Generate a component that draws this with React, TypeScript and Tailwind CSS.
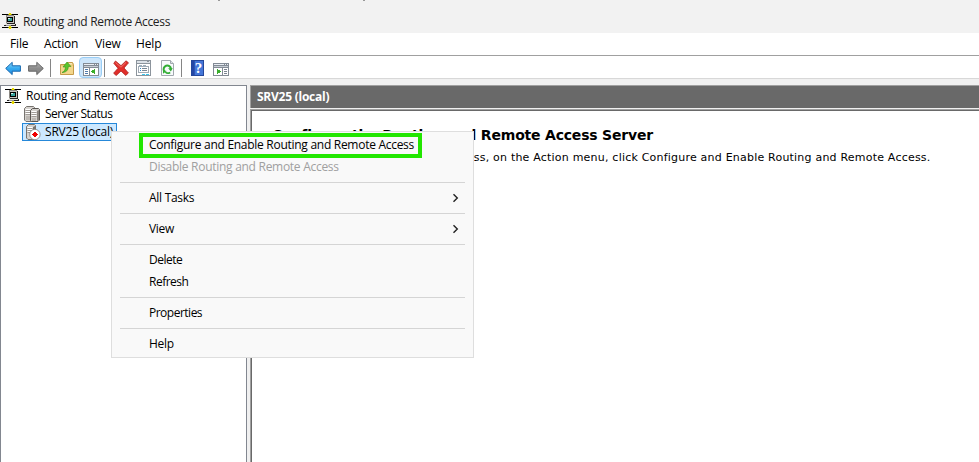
import type { ReactNode } from "react";

const ui = "font-['Open_Sans','Noto_Sans',sans-serif] text-[12px]";

function Svg({ w = 16, h = 16, crisp = true, className = "", children }: { w?: number; h?: number; crisp?: boolean; className?: string; children: ReactNode }) {
  return (
    <svg width={w} height={h} viewBox={`0 0 ${w} ${h}`} fill="none" shapeRendering={crisp ? "crispEdges" : "auto"} className={`block shrink-0 ${className}`}>
      {children}
    </svg>
  );
}

function RouterIcon() {
  return (
    <Svg>
      <path d="M0 1.5h16M0 14.5h16" stroke="#000" />
      <path d="M4 2h8v9H4z" fill="#c9c6c0" />
      <path d="M4 2h8v1H4zM4 2h1v8H4z" fill="#8c8984" />
      <path d="M12 3h1v8h-1zM5 10h7v1H5z" fill="#222" />
      <path d="M5 4h6v5H5z" fill="#000" />
      <path d="M6 5h4v3H6z" fill="#37a29c" />
      <path d="M6 5h2v1H6z" fill="#d8f0ee" />
      <path d="M3 11h10v1H3z" fill="#e4e1dc" />
      <path d="M2 12h12v1H2zM13 11h1v1h-1z" fill="#222" />
      <path d="M4 12h5v1H4z" fill="#999" />
      <path d="M7 0h2v2H7zM7 13h2v3H7z" fill="#e8dc00" />
      <path d="M6 1h1v1H6zM9 1h1v1H9zM6 14h1v1H6zM9 14h1v1H9z" fill="#8a8200" />
    </Svg>
  );
}

function ServersIcon() {
  return (
    <Svg crisp={false}>
      <path d="M.5 2.5l2-2h7l1 1V14l-1.5 1.5H2L.5 14z" fill="#d5d2ce" stroke="#77736f" />
      <path d="M1.5 3.5h5M1.5 5.5h5M1.5 7.5h5" stroke="#fff" />
      <path d="M1.5 4.5h5M1.5 6.5h5M1.5 8.5h5" stroke="#a09b96" />
      <path d="M2 10h4v4H2z" fill="#bcb7b2" />
      <path d="M6.5 4.5l2-2h6l1 1V14L14 15.5H7.5l-1-1z" fill="#d5d2ce" stroke="#5a5652" />
      <path d="M13 5v10l2-1V4z" fill="#8b8681" />
      <path d="M7.5 5.5h5M7.5 7.5h5M7.5 9.5h5" stroke="#fff" />
      <path d="M7.5 6.5h5M7.5 8.5h5M7.5 10.5h5" stroke="#a09b96" />
      <path d="M8 12h4v3H8z" fill="#bcb7b2" />
    </Svg>
  );
}

function StoppedServerIcon() {
  return (
    <Svg crisp={false}>
      <path d="M1.5 2.5l2-2h6l1 1V14L9 15.5H3L1.5 14z" fill="#d5d2ce" stroke="#77736f" />
      <path d="M8 3v7l2-1V2z" fill="#77736f" />
      <path d="M2.5 3.5h5M2.5 5.5h5M2.5 7.5h5" stroke="#fff" />
      <path d="M2.5 4.5h5M2.5 6.5h5M2.5 8.5h3" stroke="#a09b96" />
      <circle cx="9.9" cy="10.5" r="5.2" fill="#fff" stroke="#807c78" strokeWidth=".8" />
      <path d="M9 8h2v1h1v1h1v1h-1v1h-1v1H9v-1H8v-1H7v-1h1V9h1z" fill="#f00000" />
    </Svg>
  );
}

function Arrow({ right = false }: { right?: boolean }) {
  const id = right ? "fwd" : "bck";
  return (
    <Svg crisp={false} className={right ? "-scale-x-100" : ""}>
      <defs>
        <linearGradient id={id} x1="0" y1="0" x2="0" y2="1">
          <stop offset="0" stopColor={right ? "#b4b4b4" : "#8fd8fa"} />
          <stop offset=".5" stopColor={right ? "#8c8c8c" : "#35aaf0"} />
          <stop offset="1" stopColor={right ? "#828282" : "#228be0"} />
        </linearGradient>
      </defs>
      <path d="M.7 8.4L7.2 2.3v3.5h8.2v5.4H7.2v3.4z" fill={`url(#${id})`} stroke={right ? "#656565" : "#1767ae"} strokeLinejoin="round" />
    </Svg>
  );
}

function FolderUpIcon() {
  return (
    <Svg crisp={false}>
      <path d="M1.5 4.5h6l1-2h5l1 2v10h-13z" fill="#e9c878" stroke="#c59b49" />
      <path d="M2 6h12v8H2z" fill="#f3d68b" />
      <path d="M9.5 3h3.5v1.5H9z" fill="#f9e9b6" />
      <path d="M3 12.5c2.5-1 3.4-3 3.4-5.5H4L8 2l4 4.5H9.3c0 3.5-2 6-6.3 6z" fill="#5ac52c" stroke="#38921d" strokeWidth=".6" />
    </Svg>
  );
}

function PaneIcon({ flipped = false }: { flipped?: boolean }) {
  return (
    <Svg h={13}>
      <path d="M0 0h16v13H0z" fill="#838b95" />
      <path d="M1 1h10v1H1zM12 1h1v1h-1zM14 1h1v1h-1z" fill="#e9eef4" />
      <path d="M1 3h14v1H1z" fill="#c7cdd5" />
      {flipped ? (
        <>
          <path d="M1 5h8v7H1zM10 5h5v7h-5z" fill="#fff" />
          <path d="M4 5.5l4 3-4 3z" fill="#39ae2c" />
          <path d="M11 6.5h3M11 8.5h3M11 10.5h3" stroke="#7b8491" />
        </>
      ) : (
        <>
          <path d="M1 5h5v7H1zM7 5h8v7H7z" fill="#fff" />
          <path d="M12 5.5l-4 3 4 3z" fill="#39ae2c" />
          <path d="M2 6.5h3M2 8.5h3M2 10.5h3" stroke="#527cac" />
        </>
      )}
    </Svg>
  );
}

function DeleteIcon() {
  return (
    <Svg crisp={false}>
      <path d="M2.5 1L8 5.7 13 .8l2.5 2L11 8l4.4 5-2.7 2.4L8 11l-4.8 4.5-2.6-2.3L5 8.3.8 3.3z" fill="#e12f2b" stroke="#ad2421" strokeWidth=".8" strokeLinejoin="round" />
      <path d="M2.5 2.5L8 7.2l5-4.8" stroke="#f2726b" />
    </Svg>
  );
}

function PropertiesIcon() {
  return (
    <Svg>
      <path d="M.5.5h14v15H.5z" fill="#fff" stroke="#8c949c" />
      <path d="M1 1h13v2H1z" fill="#dbe1e7" />
      <path d="M11 1h2v1h-2zM1 3h13v1H1z" fill="#8c949c" />
      <path d="M2.5 6.5h10v6h-10z" stroke="#a0aab4" />
      <path d="M3 5h3v2H3zM7 5h3v2H7z" fill="#9eadb9" />
      <path d="M4 8.5h1M4 10.5h1" stroke="#278bcc" />
      <path d="M6 8.5h5M6 10.5h5" stroke="#7b8793" />
      <path d="M6 14h3v1H6zM10 14h3v1h-3z" fill="#38c6ee" />
    </Svg>
  );
}

function RefreshIcon() {
  return (
    <Svg crisp={false}>
      <path d="M1.5.5h9l3 3v12h-12z" fill="#f8fafc" stroke="#a1a8ae" />
      <path d="M10.5.5v3h3" fill="#dde2e7" stroke="#a1a8ae" />
      <path d="M4.3 11.4A3.7 3.7 0 1 1 11 9" stroke="#32ad34" strokeWidth="2" />
      <path d="M8.2 8.3h4.6l-2 3.2z" fill="#32ad34" />
      <path d="M10.2 12.4c-1.6 1-3.6.9-4.8-.4" stroke="#32ad34" strokeWidth="1.8" />
      <path d="M3 13.8V10l3.7 1z" fill="#32ad34" />
    </Svg>
  );
}

function HelpIcon() {
  return (
    <div className="flex h-4 w-[13px] items-center justify-center border border-[#24479b] bg-linear-to-r from-[#2447a5] from-20% to-[#4476d8] to-30% pl-0.5 font-['Liberation_Serif',serif] text-[15px] leading-4 font-bold text-white">
      ?
    </div>
  );
}

function ToolbarSeparator({ className }: { className: string }) {
  return <div className={`h-[18px] w-px bg-[#858585] ${className}`} />;
}

function MenuSeparator() {
  return (
    <div className="flex h-[9px] items-center px-2">
      <div className="h-px w-full bg-[#d5d5d5]" />
    </div>
  );
}

function MenuItem({ label, disabled, submenu, tight }: { label: string; disabled?: boolean; submenu?: boolean; tight?: boolean }) {
  return (
    <div className={`flex h-[22px] items-center justify-between pr-[14px] pl-[37px] ${tight ? "tracking-[-0.5px]" : "tracking-[-0.28px]"} ${disabled ? "text-[#a0a0a0]" : "text-black"}`}>
      <span>{label}</span>
      {submenu && (
        <Svg w={7} h={10} crisp={false}>
          <path d="M1.5 1.2L5.3 5 1.5 8.8" stroke="#222" strokeWidth="1.4" />
        </Svg>
      )}
    </div>
  );
}

function ContextMenu() {
  return (
    <div className={`absolute top-[131px] left-[111px] h-[227px] w-[363px] border border-[#dedede] bg-[#f9f9f9] py-0.5 whitespace-nowrap ${ui}`}>
      <MenuItem label="Configure and Enable Routing and Remote Access" />
      <MenuItem label="Disable Routing and Remote Access" disabled />
      <MenuSeparator />
      <MenuItem label="All Tasks" submenu />
      <MenuSeparator />
      <MenuItem label="View" submenu />
      <MenuSeparator />
      <MenuItem label="Delete" tight />
      <MenuItem label="Refresh" tight />
      <MenuSeparator />
      <MenuItem label="Properties" tight />
      <MenuSeparator />
      <MenuItem label="Help" />
      <div className="absolute top-[1px] left-[27px] h-[25px] w-[283px] border-4 border-[#22e600]" />
    </div>
  );
}

export default function App() {
  return (
    <div className={`relative flex h-[462px] w-[979px] flex-col overflow-hidden bg-[#f0f0f0] whitespace-nowrap text-black ${ui}`}>
      <header className="relative flex h-[33px] shrink-0 items-end bg-[#f2f2f2] pb-1 pl-0.5">
        <RouterIcon />
        <span className="ml-[5px] h-4 leading-[18px] tracking-[-0.3px] text-[#222]">Routing and Remote Access</span>
        <div className="absolute top-0 left-[218px] h-px w-[2px] bg-[#999]" />
        <div className="absolute top-0 left-[363px] h-px w-[2px] bg-[#999]" />
      </header>
      <nav className="flex h-[22px] shrink-0 bg-white pl-[10px] leading-[22px] tracking-[-0.15px]">
        <span className="w-[34px]">File</span>
        <span className="w-[51px]">Action</span>
        <span className="w-[41px]">View</span>
        <span>Help</span>
      </nav>
      <div className="flex h-[24px] shrink-0 items-center border-t border-b border-t-[#a0a0a0] border-b-[#d8d8d8] bg-white pt-[2px] pl-[5px]">
        <Arrow />
        <div className="ml-[7px]"><Arrow right /></div>
        <ToolbarSeparator className="ml-[6px]" />
        <div className="ml-2"><FolderUpIcon /></div>
        <div className="-mt-px ml-1 flex h-[21px] w-[23px] justify-center rounded-sm border border-[#99cdf5] bg-[#cde6fb] pt-[5px]"><PaneIcon /></div>
        <ToolbarSeparator className="ml-[2px]" />
        <div className="ml-2"><DeleteIcon /></div>
        <div className="ml-[7px]"><PropertiesIcon /></div>
        <div className="ml-[8px]"><RefreshIcon /></div>
        <ToolbarSeparator className="ml-[5px]" />
        <div className="ml-[9px]"><HelpIcon /></div>
        <div className="ml-[9px] pt-[3px]"><PaneIcon flipped /></div>
      </div>
      <main className="flex grow gap-[3px] pt-[6px]">
        <aside className="w-[247px] shrink-0 border border-b-0 border-[#828790] bg-white pt-px tracking-[-0.26px]">
          <div className="flex h-[18px] items-center pl-1"><RouterIcon /><span className="ml-[5px]">Routing and Remote Access</span></div>
          <div className="flex h-[18px] items-center pl-[23px] tracking-[-0.5px]"><ServersIcon /><span className="ml-[5px]">Server Status</span></div>
          <div className="ml-[21px] flex h-[18px] w-[95px] items-center border border-[#2688d9] bg-[#cce8ff] pl-[2px] tracking-[-0.2px]"><StoppedServerIcon /><span className="ml-[4px]">SRV25 (local)</span></div>
        </aside>
        <section className="flex min-w-0 grow flex-col">
          <div className="h-[23px] border-t border-l border-[#a0a0a0] bg-[#696969] pl-[6px] leading-[22px] font-bold tracking-[-0.25px] text-white">SRV25 (local)</div>
          <div className="mt-[1px] grow border-t border-l border-[#a0a0a0]">
            <div className="h-full border-t border-l border-[#696969] bg-white pt-4 pl-[20px] font-['DejaVu_Sans',Verdana,sans-serif]">
              <h1 className="text-[14px] leading-4 font-bold tracking-[-0.2px]">Configure the Routing and Remote Access Server</h1>
              <p className="mt-[7px] text-[11px] leading-4 tracking-[0.21px]">To set up Routing and Remote Access, on the Action menu, click Configure and Enable Routing and Remote Access.</p>
            </div>
          </div>
        </section>
      </main>
      <ContextMenu />
    </div>
  );
}
